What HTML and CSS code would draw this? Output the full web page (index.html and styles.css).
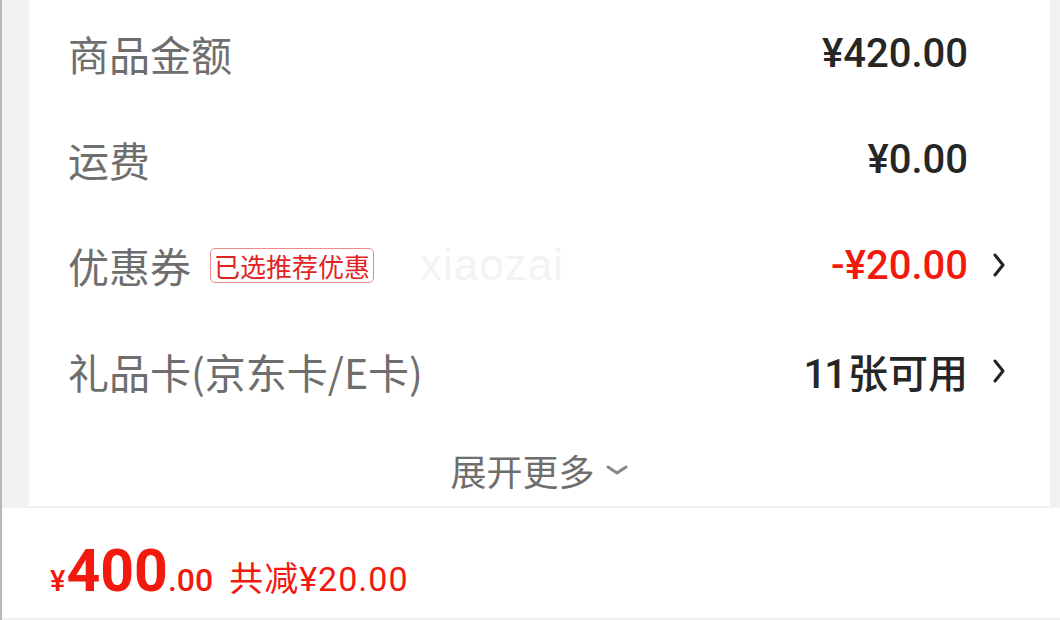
FILE: index.html
```html
<!DOCTYPE html>
<html lang="zh-CN">
<head>
  <meta charset="UTF-8">
  <meta name="viewport" content="width=device-width, initial-scale=1.0">
  <title>订单结算</title>
  <link rel="stylesheet" href="styles.css">
</head>
<body>
  <div class="page">
    <div class="card">
      <div class="row">
        <span class="label">商品金额</span>
        <span class="value">¥420.00</span>
        <span class="arrow"></span>
      </div>
      <div class="row">
        <span class="label">运费</span>
        <span class="value">¥0.00</span>
        <span class="arrow"></span>
      </div>
      <div class="row">
        <span class="label">优惠券</span>
        <span class="badge">已选推荐优惠</span>
        <span class="watermark">xiaozai</span>
        <span class="value red">-¥20.00</span>
        <span class="arrow">
          <svg width="12" height="24" viewBox="0 0 12 24"><path d="M2 2 L10 12 L2 22" fill="none" stroke="#222" stroke-width="3" stroke-linecap="round" stroke-linejoin="round"/></svg>
        </span>
      </div>
      <div class="row">
        <span class="label">礼品卡(京东卡/E卡)</span>
        <span class="value"><span class="num">11</span>张可用</span>
        <span class="arrow">
          <svg width="12" height="24" viewBox="0 0 12 24"><path d="M2 2 L10 12 L2 22" fill="none" stroke="#222" stroke-width="3" stroke-linecap="round" stroke-linejoin="round"/></svg>
        </span>
      </div>
      <div class="more">
        <span>展开更多</span>
        <svg width="24" height="12" viewBox="0 0 24 12"><path d="M3 3 L12 9 L21 3" fill="none" stroke="#888" stroke-width="3" stroke-linecap="round" stroke-linejoin="round"/></svg>
      </div>
    </div>
  </div>

  <div class="footer">
    <span class="yen">¥</span><span class="big">400</span><span class="cents">.00</span>
    <span class="saved">共减¥20.00</span>
  </div>
</body>
</html>
```

FILE: styles.css
```css
body {
  margin: 0;
  background: #f2f2f2;
  border-left: 2px solid #b8b8b8;
  height: 620px;
  overflow: hidden;
  font-family: Roboto, "Noto Sans CJK SC", sans-serif;
}

.page {
  padding: 0 10px 0 27px;
}

.card {
  background: #fff;
  height: 506px;
}

.row {
  display: flex;
  align-items: center;
  height: 106px;
  padding: 0 45px 0 39px;
}

.label {
  font-family: "Noto Sans CJK SC", sans-serif;
  font-size: 41px;
  color: #6e6e6e;
}

.badge {
  font-family: "Noto Sans CJK SC", sans-serif;
  font-size: 26px;
  line-height: 33px;
  color: #e3231f;
  border: 1px solid #eb8a87;
  border-radius: 5px;
  padding: 0 3px;
  margin-left: 19px;
}

.watermark {
  font-family: "Liberation Sans", sans-serif;
  font-size: 44px;
  letter-spacing: 1px;
  color: #f3f3f3;
  margin-left: 46px;
}

.value {
  margin-left: auto;
  font-family: Roboto, "Noto Sans CJK SC", sans-serif;
  font-weight: 500;
  font-size: 40px;
  color: #262626;
}

.value .num {
  letter-spacing: -2px;
  margin-right: 3px;
}

.value.red {
  color: #f2190f;
}

.arrow {
  width: 12px;
  margin-left: 25px;
  display: flex;
  align-items: center;
}

.more {
  display: flex;
  justify-content: center;
  align-items: center;
  gap: 10px;
  padding-top: 20px;
  font-family: "Noto Sans CJK SC", sans-serif;
  font-size: 36px;
  color: #6e6e6e;
}

.footer {
  background: #fff;
  border-top: 2px solid #f2f2f2;
  margin-left: -2px;
  border-left: 2px solid #b8b8b8;
  height: 112px;
  display: flex;
  align-items: baseline;
  padding: 28px 0 0 48px;
  box-sizing: border-box;
  color: #f2190f;
  font-family: Roboto, "Noto Sans CJK SC", sans-serif;
}

.yen {
  font-size: 29px;
  font-weight: 500;
}

.big {
  font-size: 59px;
  font-weight: 700;
  margin-left: 1px;
}

.cents {
  font-size: 32px;
  font-weight: 500;
}

.saved {
  font-size: 34px;
  letter-spacing: 1px;
  margin-left: 16px;
}
```
